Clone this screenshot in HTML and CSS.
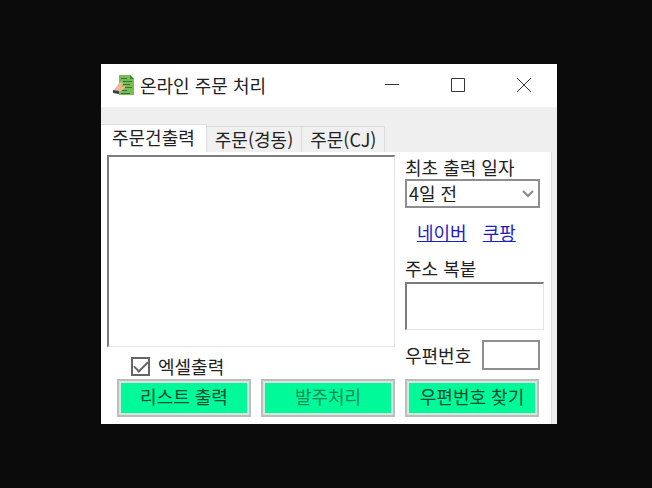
FILE: index.html
```
<!DOCTYPE html>
<html lang="ko">
<head>
    <meta charset="UTF-8">
    <meta name="viewport" content="width=device-width, initial-scale=1.0">
    <title>온라인 주문 처리</title>
    <link rel="stylesheet" href="styles.css">
</head>
<body>
    <div class="window">
        <header class="titlebar">
            <svg class="app-icon" viewBox="0 0 22 22" aria-hidden="true">
                <path d="M6 0h11l4 4v16H6z" fill="#78bd50"/>
                <path d="M17 0v4h4z" fill="#39823a"/>
                <path d="M8 3.500h6M10 6.500h9M10 9.500h7M11 12.500h8M8 15.500h6M8 18.500h9" stroke="#34743a" stroke-width="1" fill="none"/>
                <path d="M1 15l5-7 3-1 1 2-2 3 4-1v2l-5 4z" fill="#f0b793"/>
                <path d="M0 15l6 1v3l-6-1z" fill="#393c50"/>
            </svg>
            <h1>온라인 주문 처리</h1>
            <div class="window-controls">
                <button type="button" aria-label="최소화">
                    <svg viewBox="0 0 16 16"><path d="M1 7.5h14"/></svg>
                </button>
                <button type="button" aria-label="최대화">
                    <svg viewBox="0 0 16 16"><path d="M1.5 1.5h13v13h-13z"/></svg>
                </button>
                <button type="button" aria-label="닫기">
                    <svg viewBox="0 0 16 16"><path d="M1 1l14 14M15 1L1 15"/></svg>
                </button>
            </div>
        </header>

        <nav class="tabs" role="tablist">
            <button type="button" class="tab active" role="tab" aria-selected="true">주문건출력</button>
            <button type="button" class="tab" role="tab" aria-selected="false">주문(경동)</button>
            <button type="button" class="tab" role="tab" aria-selected="false">주문(CJ)</button>
        </nav>

        <form class="panel">
            <div class="orders">
                <textarea class="order-list" aria-label="주문 목록"></textarea>
                <label class="excel">
                    <input type="checkbox" checked>
                    엑셀출력
                </label>
                <div class="actions">
                    <button type="button" class="btn">리스트 출력</button>
                    <button type="button" class="btn" disabled>발주처리</button>
                </div>
            </div>

            <div class="side">
                <label for="firstDate">최초 출력 일자</label>
                <select id="firstDate">
                    <option>4일 전</option>
                </select>
                <div class="links">
                    <a href="#">네이버</a>
                    <a href="#">쿠팡</a>
                </div>
                <label for="address">주소 복붙</label>
                <textarea id="address"></textarea>
                <div class="zip">
                    <label for="zipcode">우편번호</label>
                    <input type="text" id="zipcode">
                </div>
                <button type="button" class="btn">우편번호 찾기</button>
            </div>
        </form>
    </div>
</body>
</html>
```

FILE: styles.css
```
* {
    box-sizing: border-box;
}
body {
    margin: 0;
    padding: 64px 95px 64px 101px;
    background-color: #0b0b0b;
    color: #222;
    font-family: "Noto Sans CJK KR", sans-serif;
    font-size: 18px;
    line-height: 24px;
}
button, input, select, textarea {
    margin: 0;
    color: inherit;
    font: inherit;
}
.window {
    background-color: #efefef;
}
.titlebar {
    display: flex;
    align-items: center;
    height: 43px;
    padding-left: 12px;
    background-color: white;
}
.app-icon {
    width: 22px;
    height: 22px;
    margin-right: 5px;
}
h1 {
    margin: 0;
    padding-bottom: 2px;
    font-size: 18px;
    font-weight: 400;
}
.window-controls {
    display: flex;
    margin-left: auto;
}
.window-controls button {
    width: 66px;
    height: 43px;
    padding: 0 0 2px;
    border: none;
    background: none;
}
.window-controls svg {
    display: block;
    width: 16px;
    height: 16px;
    margin: auto;
    fill: none;
    stroke: #333;
}
.tabs {
    display: flex;
    align-items: flex-end;
    padding-top: 17px;
}
.tab {
    height: 26px;
    padding: 0 8px 2px;
    border: 1px solid #dcdcdc;
    border-left: none;
    border-bottom: none;
    background-color: #f0f0f0;
    line-height: 22px;
    white-space: nowrap;
}
.tab.active {
    height: 28px;
    padding: 0 11px 4px;
    background-color: white;
}
.panel {
    display: flex;
    gap: 10px;
    margin-right: 5px;
    padding: 3px 7px 7px 6px;
    border-right: 1px solid #dcdcdc;
    background-color: white;
}
.orders {
    display: flex;
    flex: 1;
    flex-direction: column;
    min-width: 0;
}
textarea {
    display: block;
    width: 100%;
    border: 1px solid #e4e4e4;
    border-top: 2px solid #7c7c7c;
    border-left: 2px solid #7c7c7c;
    background-color: white;
    resize: none;
}
.order-list {
    height: 192px;
}
.excel {
    display: flex;
    align-items: center;
    gap: 8px;
    height: 32px;
    padding: 6px 0 0 24px;
}
.excel input {
    display: grid;
    width: 19px;
    height: 19px;
    border: 2px solid #666;
    background-color: white;
    appearance: none;
    place-items: center;
}
.excel input:checked::before {
    width: 12px;
    height: 6px;
    margin-bottom: 3px;
    border: solid #666;
    border-width: 0 0 2px 2px;
    content: "";
    transform: rotate(-45deg);
}
.actions {
    display: grid;
    grid-template-columns: 1fr 1fr;
    gap: 10px;
    padding-left: 10px;
}
.btn {
    height: 38px;
    padding: 0 0 4px;
    border: 2px solid #bcbcbc;
    background-color: #00fa9a;
    box-shadow: inset 0 0 0 2px #d5e9df;
    color: #074b30;
    line-height: 28px;
    white-space: nowrap;
}
.btn:disabled {
    color: #078957;
}
.side {
    display: flex;
    flex-direction: column;
    width: 139px;
}
select {
    width: 135px;
    height: 29px;
    padding: 0 26px 4px 2px;
    border: 2px solid #8e8e8e;
    border-radius: 0;
    background: white url("data:image/svg+xml,%3Csvg xmlns='http://www.w3.org/2000/svg' viewBox='0 0 12 8'%3E%3Cpath d='M1 1l5 5 5-5' fill='none' stroke='%23888' stroke-width='2'/%3E%3C/svg%3E") no-repeat right 4px center / 12px 8px;
    appearance: none;
}
.links {
    display: flex;
    gap: 16px;
    padding: 12px 12px;
}
.links a {
    color: #1c1cc8;
}
#address {
    height: 48px;
    margin-top: 2px;
}
.zip {
    display: flex;
    align-items: center;
    justify-content: space-between;
    width: 135px;
    padding: 10px 0 9px;
}
.zip input {
    width: 58px;
    height: 30px;
    border: 2px solid #8e8e8e;
    background-color: white;
}
.side .btn {
    width: 134px;
}
```
